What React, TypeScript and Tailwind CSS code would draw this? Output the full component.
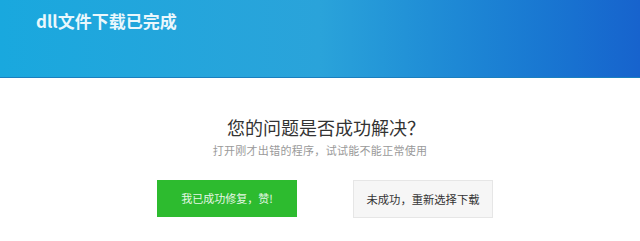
export default function App() {
  const cjk = { fontFamily: '"Noto Sans CJK SC", "Noto Sans", sans-serif' }

  return (
    <div className="w-[640px] h-[241px] bg-white overflow-hidden" style={cjk}>
      {/* header */}
      <div className="h-[78px] border-b border-[#1a7fbf] bg-gradient-to-r from-[#19a8de] via-[#2aa3da] to-[#1763cd] px-[36px] pt-[10px]">
        <h1 className="text-[17px] font-bold leading-[22px] text-[#eaf7fc]">dll文件下载已完成</h1>
      </div>

      {/* body */}
      <div className="flex flex-col items-center pt-[37px]">
        <h2 className="pl-[12px] text-[18px] leading-[24px] text-[#333]">您的问题是否成功解决？</h2>
        <p className="mt-[3px] text-[11px] leading-[16px] tracking-[0.3px] text-[#9a9a9a]">
          打开刚才出错的程序，试试能不能正常使用
        </p>

        <div className="mt-[22px] flex gap-[56px] pl-[10px]">
          <button className="flex h-[37px] w-[140px] items-center justify-center bg-[#2dbb2f] text-[11px] text-[#e6f7e6]">
            我已成功修复，赞!
          </button>
          <button className="flex h-[38px] w-[140px] items-center justify-center border border-[#e6e6e6] bg-[#f6f6f6] text-[11.3px] text-[#333]">
            未成功，重新选择下载
          </button>
        </div>
      </div>
    </div>
  )
}
